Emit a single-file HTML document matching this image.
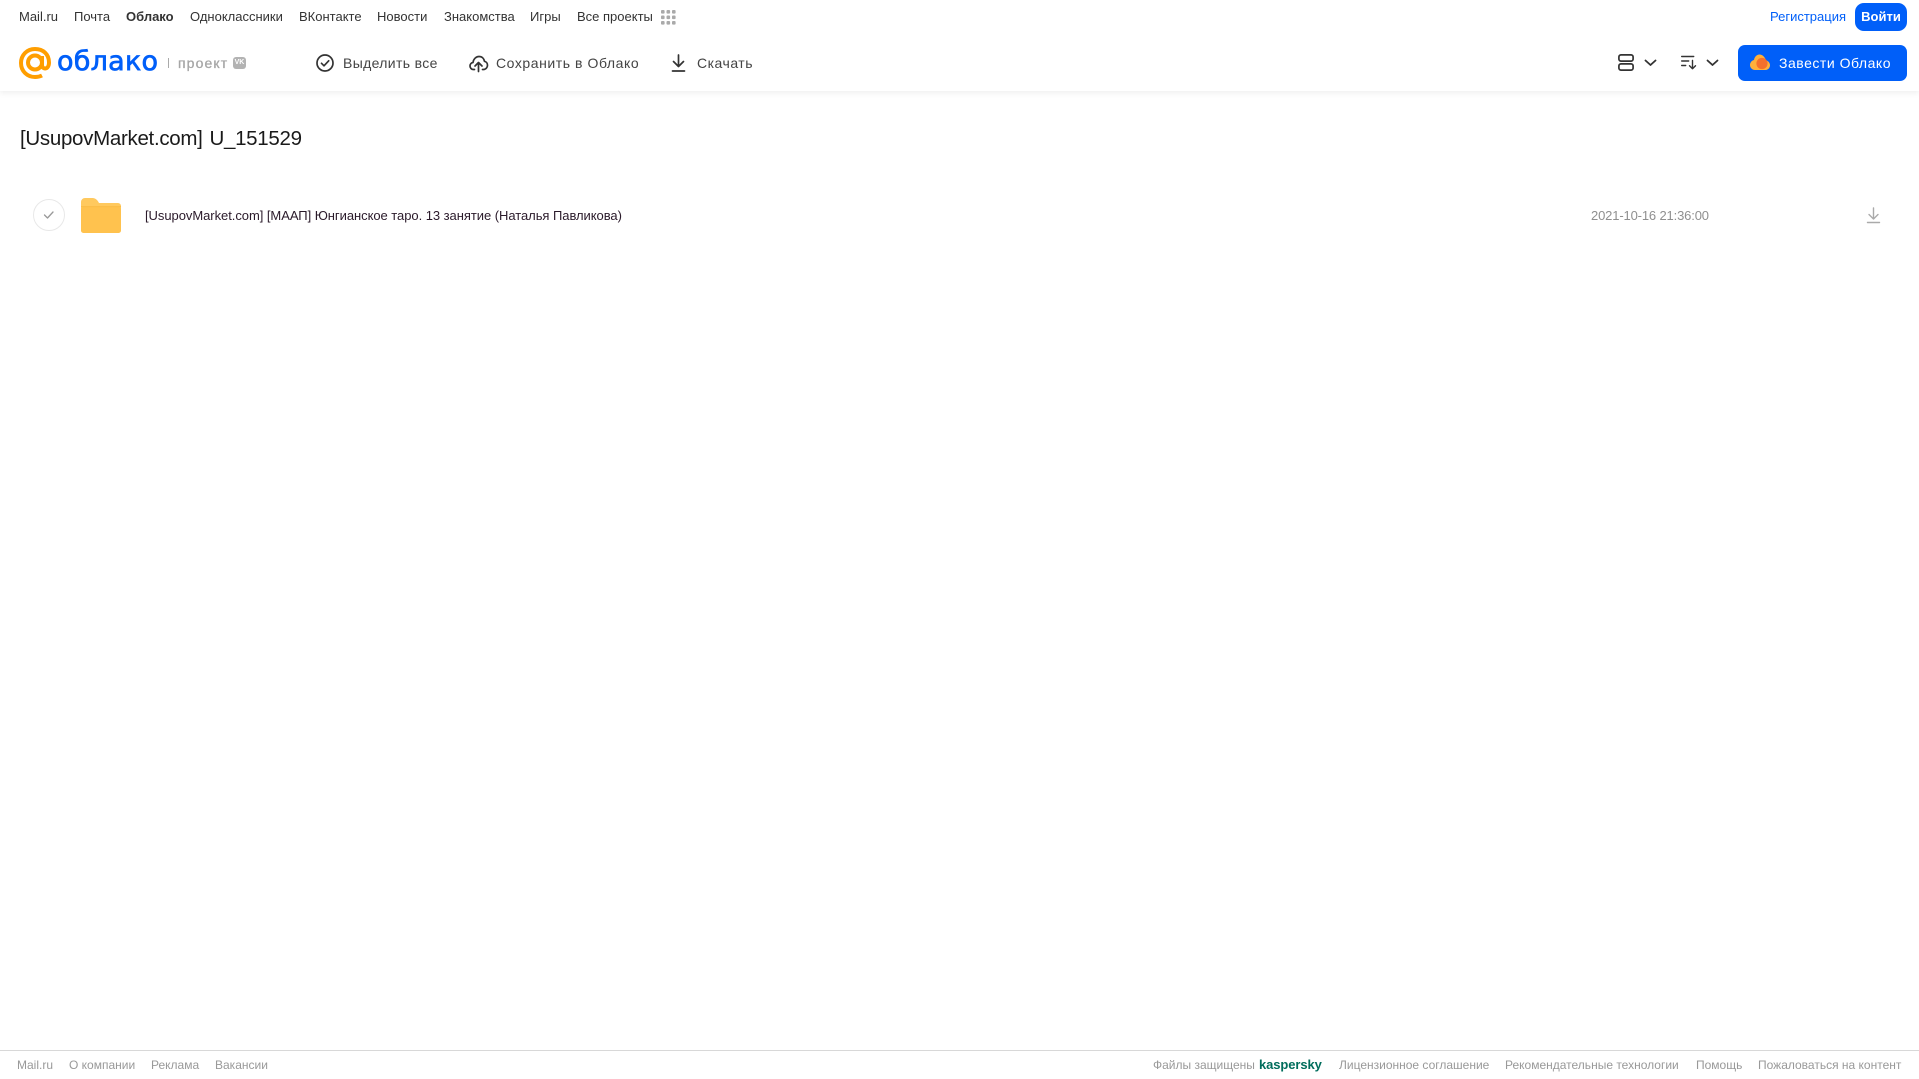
<!DOCTYPE html>
<html lang="ru"><head><meta charset="utf-8"><title>Облако</title>
<style>
html,body{margin:0;padding:0;background:#fff;width:1919px;height:1079px;overflow:hidden;font-family:"Liberation Sans",sans-serif}
.t{position:absolute;white-space:nowrap;line-height:16px}
.n{top:9px;font-size:13px;color:#333}
.b{top:55px;font-size:14px;color:#444;letter-spacing:.35px}
.f{top:1057px;font-size:12px;color:#999}
svg{position:absolute;overflow:visible}
#hd{position:absolute;left:0;top:0;width:1919px;height:91px;background:#fff;box-shadow:0 2px 6px rgba(0,0,0,.07)}
</style></head><body>
<div id="hd"></div>
<span class="t n" style="left:19px">Mail.ru</span>
<span class="t n" style="left:74px">Почта</span>
<span class="t n" style="left:126px;font-weight:bold">Облако</span>
<span class="t n" style="left:190px">Одноклассники</span>
<span class="t n" style="left:299px">ВКонтакте</span>
<span class="t n" style="left:377px">Новости</span>
<span class="t n" style="left:444px">Знакомства</span>
<span class="t n" style="left:530px">Игры</span>
<span class="t n" style="left:577px">Все проекты</span>
<svg style="left:661px;top:10px" width="15" height="15" fill="#aaa"><rect x="0" y="0" width="3.6" height="3.6" rx="1"/><rect x="5.5" y="0" width="3.6" height="3.6" rx="1"/><rect x="11" y="0" width="3.6" height="3.6" rx="1"/><rect x="0" y="5.5" width="3.6" height="3.6" rx="1"/><rect x="5.5" y="5.5" width="3.6" height="3.6" rx="1"/><rect x="11" y="5.5" width="3.6" height="3.6" rx="1"/><rect x="0" y="11" width="3.6" height="3.6" rx="1"/><rect x="5.5" y="11" width="3.6" height="3.6" rx="1"/><rect x="11" y="11" width="3.6" height="3.6" rx="1"/></svg>

<svg style="left:19px;top:47px" width="33" height="33" fill="none" stroke="#ff9e00" stroke-width="4"><circle cx="16" cy="15.5" r="7"/><path d="M23 9v9c0 5 7 5 7-2.500C30 7 24 2 16 2 8 2 2 8 2 16s6 14 14 14c3 0 5-.5 7-1.500"/></svg>
<span class="t" style="left:57px;top:45px;font-size:27px;line-height:34px;color:#005ff9;font-family:'DejaVu Sans',sans-serif;letter-spacing:.25px;-webkit-text-stroke:.7px #005ff9">облако</span>
<div style="position:absolute;left:168px;top:58px;width:1px;height:10px;background:#aaa"></div>
<span class="t" style="left:178px;top:55px;font-size:14px;color:#a6a6a6;-webkit-text-stroke:.3px #a6a6a6;letter-spacing:1.1px">проект</span>
<div style="position:absolute;left:233px;top:57px;width:13px;height:12px;background:#b3b3b3;border-radius:3px;color:#fff;font-size:7px;font-weight:bold;line-height:12px;text-align:center">VK</div>

<svg style="left:316px;top:54px" width="18" height="18" fill="none" stroke="#333" stroke-width="1.700"><circle cx="9" cy="9" r="8"/><path d="M5.500 9.300l2.500 2.500 4.700-5" stroke-linecap="round" stroke-linejoin="round"/></svg>
<span class="t b" style="left:343px">Выделить все</span>
<svg style="left:469px;top:55px" width="19" height="17" fill="none" stroke="#333" stroke-width="1.700" stroke-linecap="round" stroke-linejoin="round"><path d="M5.500 14.500H4.500C2.500 14.500 1 13 1 11c0-1.800 1.200-3.200 3-3.500C4.500 4 7 1.500 10 1.500c3 0 5 2 5.500 4.800 1.700.4 3 2 3 3.900 0 2.300-1.700 4.300-4 4.300h-1"/><path d="M9.500 16.500V8M6 11l3.500-3.500L13 11"/></svg>
<span class="t b" style="left:496px;letter-spacing:.56px">Сохранить в Облако</span>
<svg style="left:672px;top:54px" width="13" height="18" fill="none" stroke="#333" stroke-width="1.700" stroke-linecap="round" stroke-linejoin="round"><path d="M6.500 1v11.500M1.500 7.500l5 5 5-5"/><path d="M.5 17h12"/></svg>
<span class="t b" style="left:697px;letter-spacing:.5px">Скачать</span>

<span class="t n" style="left:1770px;color:#005ff9">Регистрация</span>
<div style="position:absolute;left:1855px;top:3px;width:52px;height:28px;border-radius:9px;background:#005ff9;color:#fff;font-size:13px;font-weight:bold;line-height:27px;text-align:center">Войти</div>

<svg style="left:1618px;top:54px" width="16" height="17" fill="none" stroke="#333" stroke-width="1.700"><rect x=".9" y=".9" width="14.200" height="6.200" rx="2"/><rect x=".9" y="9.900" width="14.200" height="6.200" rx="2"/></svg>
<svg style="left:1644px;top:59px" width="13" height="8" fill="none" stroke="#333" stroke-width="1.800" stroke-linecap="round" stroke-linejoin="round"><path d="M1.500 1.500L6.500 6l5-4.500"/></svg>
<svg style="left:1681px;top:55px" width="16" height="15" fill="none" stroke="#333" stroke-width="1.400" stroke-linecap="round" stroke-linejoin="round"><path d="M.7 1.500h12M.7 6h7M.7 10.500h4"/><path d="M11.500 5.500v8M8.500 10.800l3 3 3-3"/></svg>
<svg style="left:1706px;top:59px" width="13" height="8" fill="none" stroke="#333" stroke-width="1.800" stroke-linecap="round" stroke-linejoin="round"><path d="M1.500 1.500L6.500 6l5-4.500"/></svg>

<div style="position:absolute;left:1738px;top:45px;width:169px;height:36px;border-radius:7px;background:#005ff9"></div>
<svg style="left:1750px;top:54px" width="20" height="17"><path d="M5 16h10c2.800 0 5-2 5-4.800 0-2.500-1.800-4.400-4-4.700C15 3 12.500 .5 9.500.5 6.500.5 4.500 3 4 6 1.800 6.600 0 8.500 0 11c0 2.800 2.200 5 5 5z" fill="#ffb03a"/><circle cx="12" cy="9.500" r="5.600" fill="#f4702c"/></svg>
<span class="t b" style="left:1779px;color:#fff;letter-spacing:.52px">Завести Облако</span>

<span class="t" style="left:20px;top:126px;font-size:20.500px;line-height:26px;color:#1a1a1a;letter-spacing:-.3px;word-spacing:1.500px">[UsupovMarket.com] U_151529</span>

<div style="position:absolute;left:33px;top:199px;width:30px;height:30px;border:1px solid #e8e8e8;border-radius:50%"></div>
<svg style="left:43px;top:210px" width="12" height="10" fill="none" stroke="#999" stroke-width="1.300" stroke-linecap="round" stroke-linejoin="round"><path d="M1.500 5l3 3L10 2"/></svg>
<svg style="left:81px;top:198px" width="40" height="35"><path d="M0 4a4 4 0 0 1 4-4h7c3 0 4.500 1.200 6 3.300L18 5h19a3 3 0 0 1 3 3v24a3 3 0 0 1-3 3H3a3 3 0 0 1-3-3z" fill="#ffc95e"/><rect x="0" y="9" width="40" height="26" rx="2.500" fill="#ffc24e"/><rect x="0" y="8" width="40" height="1.200" fill="#fbbd48"/></svg>
<span class="t" style="left:145px;top:208px;font-size:13px;letter-spacing:-.05px;color:#2a1a2a">[UsupovMarket.com] [МААП] Юнгианское таро. 13 занятие (Наталья Павликова)</span>
<span class="t" style="left:1591px;top:208px;font-size:13px;letter-spacing:-.15px;color:#8f8f8f">2021-10-16 21:36:00</span>
<svg style="left:1866px;top:207px" width="15" height="17" fill="none" stroke="#aaa" stroke-width="1.400" stroke-linecap="round" stroke-linejoin="round"><path d="M7.500 1v10.500M3 7.500l4.500 4.500L12 7.500"/><path d="M1.500 15.500h12"/></svg>

<div style="position:absolute;left:0;top:1050px;width:1919px;height:1px;background:#d8d8d8"></div>
<span class="t f" style="left:17px">Mail.ru</span>
<span class="t f" style="left:69px">О компании</span>
<span class="t f" style="left:151px">Реклама</span>
<span class="t f" style="left:215px">Вакансии</span>
<span class="t f" style="left:1153px">Файлы защищены</span>
<span class="t f" style="left:1259px;color:#006d5c;font-weight:bold;font-size:13px;letter-spacing:-.1px">kaspersky</span>
<span class="t f" style="left:1339px">Лицензионное соглашение</span>
<span class="t f" style="left:1505px">Рекомендательные технологии</span>
<span class="t f" style="left:1696px">Помощь</span>
<span class="t f" style="left:1758px">Пожаловаться на контент</span>
</body></html>
